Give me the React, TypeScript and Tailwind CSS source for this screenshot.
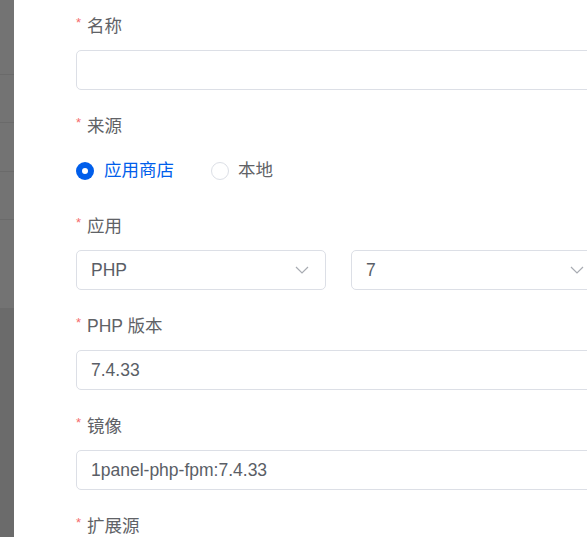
import type { ReactNode } from 'react';

const Label = ({ children }: { children: ReactNode }) => (
  <div className="h-8 flex items-center pt-[4px] text-[17.5px] text-[#606266]">
    <span className="text-[#f56c6c] text-[13px] mr-[6px] -mt-[6px]">*</span>
    {children}
  </div>
);

const Field = ({ value }: { value?: string }) => (
  <div className="mt-[10px] h-10 w-[525px] rounded-[5px] border border-[#dcdfe6] bg-white flex items-center px-[14px] text-[17.5px] text-[#5a5e66]">
    {value}
  </div>
);

const Chevron = () => (
  <svg width="14" height="8" viewBox="0 0 14 8" fill="none" className="text-[#a8abb2]">
    <path d="M1 1l6 6 6-6" stroke="currentColor" strokeWidth="1.2" />
  </svg>
);

const Select = ({ value }: { value: string }) => (
  <div className="h-10 w-[250px] rounded-[5px] border border-[#dcdfe6] bg-white flex items-center justify-between pl-[14px] pr-[16px] text-[17.5px] text-[#5a5e66]">
    <span>{value}</span>
    <Chevron />
  </div>
);

export default function App() {
  return (
    <div
      className="w-[587px] h-[537px] overflow-hidden flex bg-white"
      style={{ fontFamily: '"Liberation Sans", "Noto Sans CJK SC", sans-serif' }}
    >
      <div className="w-[14px] shrink-0 flex flex-col">
        <div className="h-[75px] bg-[#737373] border-b border-[#6a6a6a]" />
        <div className="h-[48px] bg-[#737373] border-b border-[#6a6a6a]" />
        <div className="h-[49px] bg-[#737373] border-b border-[#6a6a6a]" />
        <div className="h-[48px] bg-[#737373] border-b border-[#6a6a6a]" />
        <div className="h-[88px] bg-[#737373]" />
        <div className="flex-1 bg-[#6b6b6b]" />
      </div>

      <div className="flex-1 pl-[62px] pt-2">
        <div className="mb-[18px]">
          <Label>名称</Label>
          <Field />
        </div>

        <div className="mb-[18px]">
          <Label>来源</Label>
          <div className="mt-[10px] h-10 flex items-center pt-[1px] text-[17.5px]">
            <div className="flex items-center mr-[37px]">
              <span className="w-[18px] h-[18px] rounded-full bg-[#005eeb] flex items-center justify-center mr-[10px]">
                <span className="w-[6px] h-[6px] rounded-full bg-white" />
              </span>
              <span className="text-[#005eeb]">应用商店</span>
            </div>
            <div className="flex items-center">
              <span className="w-[18px] h-[18px] rounded-full border border-[#dcdfe6] bg-white mr-[9px]" />
              <span className="text-[#606266]">本地</span>
            </div>
          </div>
        </div>

        <div className="mb-[18px]">
          <Label>应用</Label>
          <div className="mt-[10px] flex gap-[25px] w-[600px]">
            <Select value="PHP" />
            <Select value="7" />
          </div>
        </div>

        <div className="mb-[18px]">
          <Label>PHP 版本</Label>
          <Field value="7.4.33" />
        </div>

        <div className="mb-[18px]">
          <Label>镜像</Label>
          <Field value="1panel-php-fpm:7.4.33" />
        </div>

        <div className="mb-[18px]">
          <Label>扩展源</Label>
        </div>
      </div>
    </div>
  );
}
